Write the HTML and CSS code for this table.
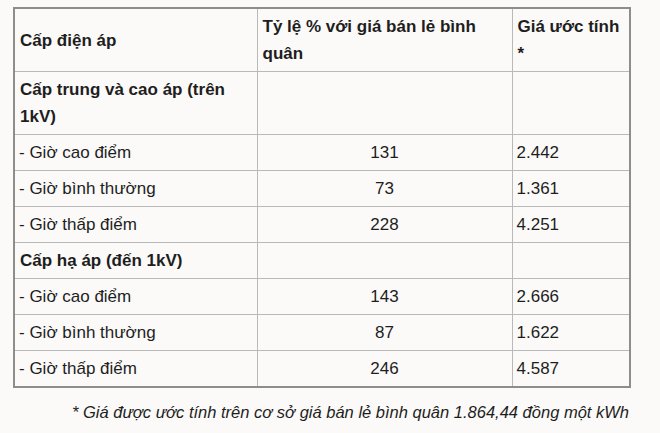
FILE: index.html
```html
<!DOCTYPE html>
<html lang="vi">
<head>
<meta charset="utf-8">
<title>Bảng giá điện</title>
<link rel="stylesheet" href="styles.css">
</head>
<body>
<div class="wrap">
  <table class="price">
    <colgroup>
      <col class="c1"><col class="c2"><col class="c3">
    </colgroup>
    <tr class="h2">
      <th>Cấp điện áp</th>
      <th>Tỷ lệ % với giá bán lẻ bình quân</th>
      <th>Giá ước tính *</th>
    </tr>
    <tr class="h2b">
      <th>Cấp trung và cao áp (trên 1kV)</th>
      <td></td>
      <td></td>
    </tr>
    <tr><td>- Giờ cao điểm</td><td class="num">131</td><td>2.442</td></tr>
    <tr><td>- Giờ bình thường</td><td class="num">73</td><td>1.361</td></tr>
    <tr><td>- Giờ thấp điểm</td><td class="num">228</td><td>4.251</td></tr>
    <tr><th>Cấp hạ áp (đến 1kV)</th><td></td><td></td></tr>
    <tr><td>- Giờ cao điểm</td><td class="num">143</td><td>2.666</td></tr>
    <tr><td>- Giờ bình thường</td><td class="num">87</td><td>1.622</td></tr>
    <tr><td>- Giờ thấp điểm</td><td class="num">246</td><td>4.587</td></tr>
  </table>
  <p class="note">* Giá được ước tính trên cơ sở giá bán lẻ bình quân 1.864,44 đồng một kWh</p>
</div>
</body>
</html>
```
FILE: styles.css
```css
html, body {
  margin: 0;
  padding: 0;
  background: #fbfaf8;
}
body {
  font-family: "Liberation Sans", Arial, sans-serif;
  font-size: 17px;
  color: #1e1e1e;
}
.wrap {
  width: 616px;
  padding: 7px 0 0 13px;
}
.price {
  width: 616px;
  border-collapse: collapse;
  border: 2px solid #8d8d8d;
  table-layout: fixed;
}
.c1 { width: 243px; }
.c2 { width: 255px; }
.c3 { width: 118px; }
.price th,
.price td {
  border: 1px solid #b9b9b9;
  padding: 4px 4px 4px 4px;
  line-height: 27px;
  height: 27px;
  text-align: left;
  vertical-align: middle;
  font-weight: normal;
}
.price th {
  font-weight: bold;
  padding-left: 5px;
}
.price tr.h2 th { height: 53px; }
.price tr.h2b th { height: 52px; }
.price td.num {
  text-align: center;
}
.note {
  margin: 14px 0 0 0;
  text-align: right;
  font-style: italic;
  font-size: 16.5px;
  line-height: 20px;
}
```
